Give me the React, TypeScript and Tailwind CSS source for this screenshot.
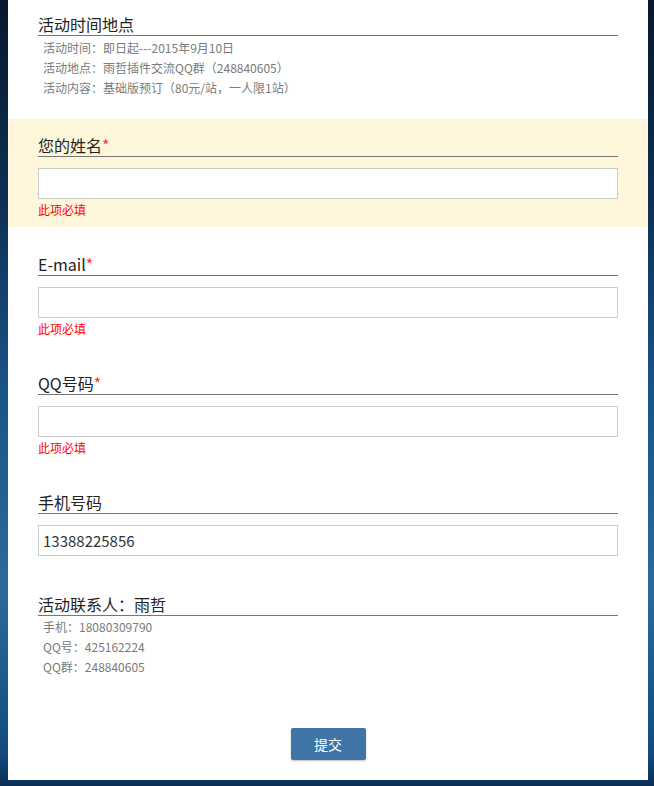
import React from "react";
import type { FC, ReactNode } from "react";

const font = "font-['Microsoft_YaHei','Noto_Sans_CJK_SC',sans-serif]";

interface FieldProps {
  label: string;
  required?: boolean;
  value?: string;
  error?: boolean;
  highlight?: boolean;
  css?: string;
}

const Heading: FC<{ children: ReactNode }> = ({ children }) => (
  <h3 className="text-[16px] leading-[21px] pt-[1px] text-[#222] border-b border-[#777]">{children}</h3>
);

const Field: FC<FieldProps> = ({ label, required, value, error, highlight, css = "" }) => (
  <li className={`px-[30px] pt-[15px] ${highlight ? "bg-[#fef6db]" : ""} ${css}`}>
    <Heading>
      {label}
      {required && <span className="text-[#f33]">*</span>}
    </Heading>
    <input
      type="text"
      defaultValue={value}
      className="mt-[11px] block w-full h-[31px] border border-[#ccc] bg-white px-[4px] text-[15px] text-[#333] outline-none"
    />
    {error && <p className="mt-[2px] text-[12px] leading-[18px] text-[#f00]">此项必填</p>}
  </li>
);

const Info: FC<{ lines: string[] }> = ({ lines }) => (
  <div className="pl-[5px] text-[12px] leading-[20px] text-[#7a7a7a]">
    {lines.map(line => (
      <p key={line}>{line}</p>
    ))}
  </div>
);

export default function App() {
  return (
    <div
      className={`${font} w-[654px] h-[786px] overflow-hidden pl-[8px] pr-[6px] bg-[linear-gradient(180deg,#07182c_0%,#0e2f52_25%,#1a5487_50%,#2a6b9c_75%,#134a7c_96%,#0a2f55_100%)]`}
    >
      <div className="w-[640px] h-[780px] bg-white">
        <section className="px-[30px] pt-[13px]">
          <Heading>活动时间地点</Heading>
          <div className="mt-[2px]">
            <Info
              lines={[
                "活动时间：即日起---2015年9月10日",
                "活动地点：雨哲插件交流QQ群（248840605）",
                "活动内容：基础版预订（80元/站，一人限1站）",
              ]}
            />
          </div>
        </section>

        <ul className="mt-[21px]">
          <Field label="您的姓名" required error highlight css="pb-[8px]" />
          <Field label="E-mail" required error css="mt-[11px] pb-[8px]" />
          <Field label="QQ号码" required error css="mt-[11px] pb-[8px]" />
          <Field label="手机号码" value="13388225856" css="mt-[11px]" />
        </ul>

        <section className="px-[30px] mt-[37px]">
          <Heading>活动联系人：雨哲</Heading>
          <div className="mt-[1px]">
            <Info lines={["手机：18080309790", "QQ号：425162224", "QQ群：248840605"]} />
          </div>
        </section>

        <div className="mt-[51px] flex justify-center">
          <button
            type="submit"
            className="w-[75px] h-[32px] rounded-[2px] bg-[#3f74a6] text-[14px] text-white shadow-[0_1px_2px_rgba(0,0,0,0.25)]"
          >
            提交
          </button>
        </div>
      </div>
      <div className="h-[3px]" />
    </div>
  );
}
